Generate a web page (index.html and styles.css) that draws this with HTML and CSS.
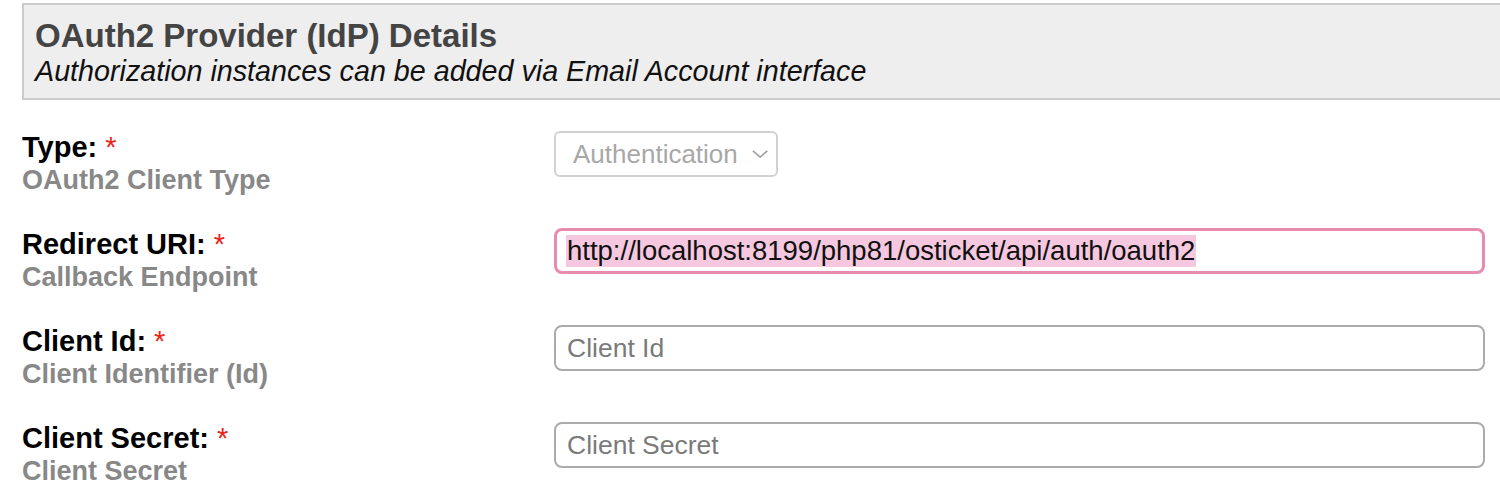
FILE: index.html
```html
<!DOCTYPE html>
<html lang="en">
<head>
<meta charset="utf-8">
<title>OAuth2 Provider (IdP) Details</title>
<link rel="stylesheet" href="styles.css">
</head>
<body>
<div class="page">
  <div class="section-head">
    <div class="section-title">OAuth2 Provider (IdP) Details</div>
    <div class="section-sub">Authorization instances can be added via Email Account interface</div>
  </div>
  <div class="form">
    <div class="row">
      <div class="label-block">
        <div class="label">Type: <span class="req">*</span></div>
        <div class="hint">OAuth2 Client Type</div>
      </div>
      <div class="field">
        <div class="select">
          <span class="select-text">Authentication</span>
          <svg class="chev" width="18" height="10" viewBox="0 0 18 10"><path d="M1 1.5 L9 8.5 L17 1.5" fill="none" stroke="#9a9a9a" stroke-width="1.6"/></svg>
        </div>
      </div>
    </div>
    <div class="row">
      <div class="label-block">
        <div class="label">Redirect URI: <span class="req">*</span></div>
        <div class="hint">Callback Endpoint</div>
      </div>
      <div class="field">
        <div class="text-input focused"><span class="selected">http://localhost:8199/php81/osticket/api/auth/oauth2</span></div>
      </div>
    </div>
    <div class="row">
      <div class="label-block">
        <div class="label">Client Id: <span class="req">*</span></div>
        <div class="hint">Client Identifier (Id)</div>
      </div>
      <div class="field">
        <input class="text-input" type="text" placeholder="Client Id">
      </div>
    </div>
    <div class="row">
      <div class="label-block">
        <div class="label">Client Secret: <span class="req">*</span></div>
        <div class="hint">Client Secret</div>
      </div>
      <div class="field">
        <input class="text-input" type="text" placeholder="Client Secret">
      </div>
    </div>
  </div>
</div>
</body>
</html>
```
FILE: styles.css
```css
html, body {
  margin: 0;
  padding: 0;
  background: #fff;
  overflow: hidden;
}
body {
  font-family: "Liberation Sans", Arial, Helvetica, sans-serif;
}
.page {
  padding: 3px 0 0 22px;
}
.section-head {
  background: #eeeeee;
  border: 2px solid #cccccc;
  border-right: none;
  padding: 12px 0 9px 11px;
  height: 72px;
}
.section-title {
  font-size: 33px;
  line-height: 37px;
  font-weight: bold;
  color: #444444;
}
.section-sub {
  margin-top: 1px;
  font-size: 28.7px;
  line-height: 32px;
  font-style: italic;
  color: #111111;
}
.form {
  padding-top: 31px;
  display: flex;
  flex-direction: column;
  gap: 32px;
}
.row {
  display: grid;
  grid-template-columns: 532px 931px;
  align-items: start;
}
.label {
  font-size: 29px;
  line-height: 32px;
  font-weight: bold;
  color: #000;
}
.req {
  color: #e8261b;
  font-weight: normal;
}
.hint {
  font-size: 27px;
  line-height: 32px;
  font-weight: bold;
  color: #888888;
  margin-top: 1px;
}
.select {
  display: inline-flex;
  align-items: center;
  box-sizing: border-box;
  width: 224px;
  height: 46px;
  border: 2px solid #d2d2d2;
  border-radius: 6px;
  padding: 0 8px 0 17px;
  gap: 14px;
  font-size: 26px;
  color: #a8a8a8;
}
.chev {
  display: block;
}
.text-input {
  display: block;
  box-sizing: border-box;
  width: 931px;
  height: 46px;
  margin: 0;
  border: 2px solid #ababab;
  border-radius: 8px;
  padding: 0 11px;
  font-family: "Liberation Sans", Arial, Helvetica, sans-serif;
  font-size: 26.5px;
  color: #111;
  background: #fff;
  outline: none;
}
.text-input::placeholder {
  color: #7a7a7a;
  opacity: 1;
}
.text-input.focused {
  border: 3px solid #e78bb1;
  padding: 0 0 0 9px;
  display: flex;
  align-items: center;
  font-size: 27.5px;
}
.selected {
  background: #f5c8df;
  padding: 0 1px;
  line-height: 32px;
}
```
